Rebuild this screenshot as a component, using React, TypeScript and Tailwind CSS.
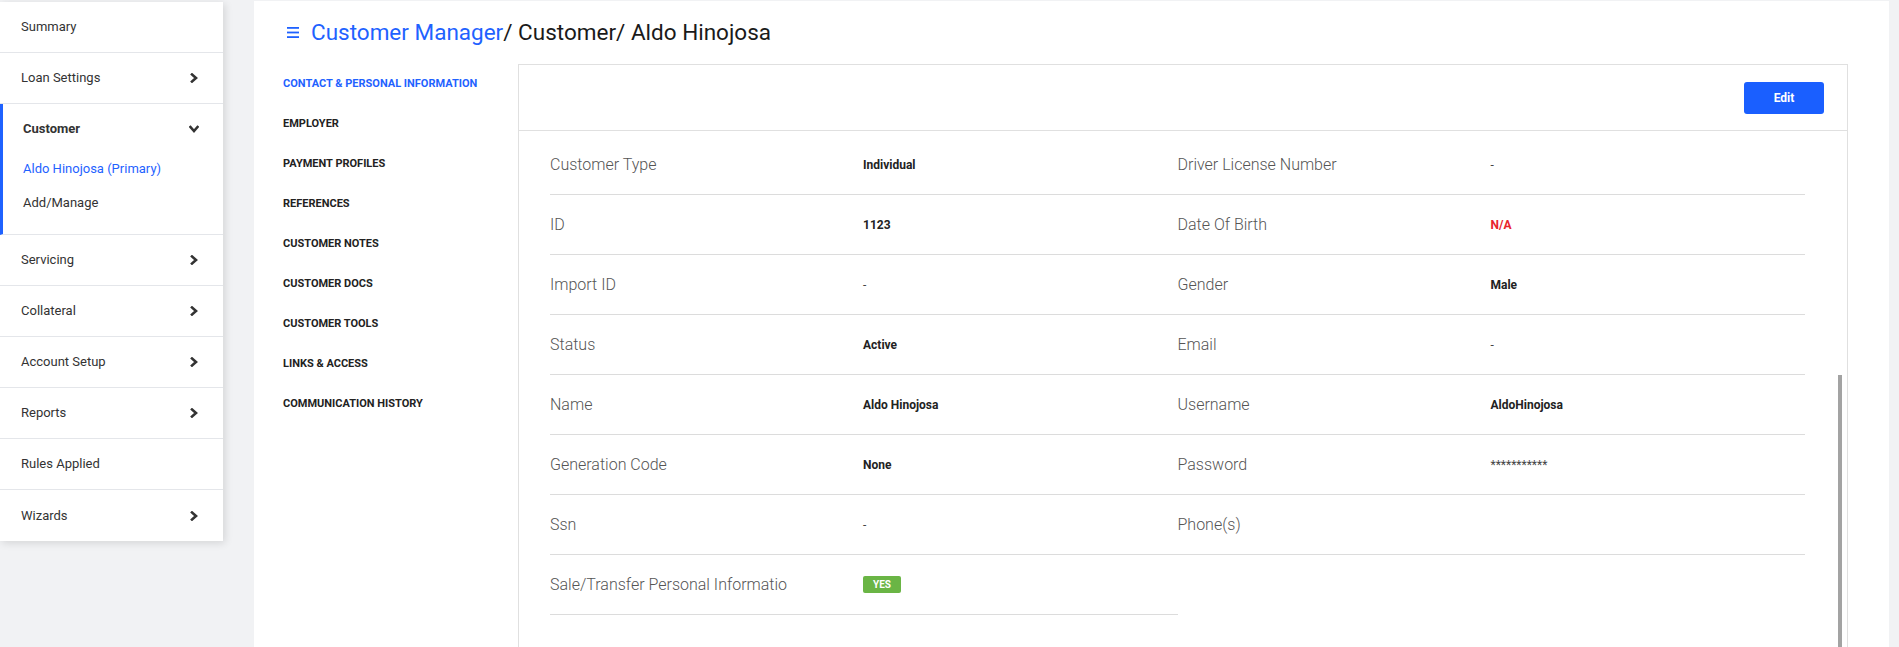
const sideItems = [
  { label: 'Summary', arrow: false },
  { label: 'Loan Settings', arrow: true },
];
const sideItemsAfter = [
  { label: 'Servicing', arrow: true },
  { label: 'Collateral', arrow: true },
  { label: 'Account Setup', arrow: true },
  { label: 'Reports', arrow: true },
  { label: 'Rules Applied', arrow: false },
  { label: 'Wizards', arrow: true },
];

const tabs = [
  'Contact & Personal Information',
  'Employer',
  'Payment Profiles',
  'References',
  'Customer Notes',
  'Customer Docs',
  'Customer Tools',
  'Links & Access',
  'Communication History',
];

type Field = { label: string; value?: string; kind?: 'red' | 'badge' | 'plain' };

const rows: [Field, Field | null][] = [
  [{ label: 'Customer Type', value: 'Individual' }, { label: 'Driver License Number', value: '-', kind: 'plain' }],
  [{ label: 'ID', value: '1123' }, { label: 'Date Of Birth', value: 'N/A', kind: 'red' }],
  [{ label: 'Import ID', value: '-', kind: 'plain' }, { label: 'Gender', value: 'Male' }],
  [{ label: 'Status', value: 'Active' }, { label: 'Email', value: '-', kind: 'plain' }],
  [{ label: 'Name', value: 'Aldo Hinojosa' }, { label: 'Username', value: 'AldoHinojosa' }],
  [{ label: 'Generation Code', value: 'None' }, { label: 'Password', value: '***********', kind: 'plain' }],
  [{ label: 'Ssn', value: '-', kind: 'plain' }, { label: 'Phone(s)' }],
  [{ label: 'Sale/Transfer Personal Informatio', value: 'YES', kind: 'badge' }, null],
];

function Chevron({ down }: { down?: boolean }) {
  return (
    <svg width="10" height="10" viewBox="0 0 10 10" className={down ? 'rotate-90' : ''}>
      <polyline points="3,1.5 7,5 3,8.5" fill="none" stroke="#333" strokeWidth="2.6" strokeLinecap="square" />
    </svg>
  );
}

function SideRow({ label, arrow, last }: { label: string; arrow: boolean; last?: boolean }) {
  return (
    <div
      className={`flex h-[51px] items-center justify-between pl-[21px] pr-[24px] text-[13px] text-[#333] ${
        last ? '' : 'border-b border-[#e4e6ea]'
      }`}
    >
      <span>{label}</span>
      {arrow && <Chevron />}
    </div>
  );
}

function Value({ f }: { f: Field }) {
  if (!f.value) return null;
  if (f.kind === 'badge')
    return (
      <span className="rounded-[2px] bg-[#6ab545] px-[10px] py-[2px] text-[10px] font-bold leading-[13px] text-white">
        {f.value}
      </span>
    );
  if (f.kind === 'red') return <span className="text-[12px] font-bold text-[#e8242c]">{f.value}</span>;
  if (f.kind === 'plain') return <span className="text-[12px] text-[#444]">{f.value}</span>;
  return <span className="text-[12px] font-bold text-[#222]">{f.value}</span>;
}

function Cell({ f }: { f: Field | null }) {
  if (!f) return <div />;
  return (
    <div className="flex h-[60px] items-center border-b border-[#dcdcdc]">
      <div className="w-[313px] text-[16px] font-light text-[#555]">{f.label}</div>
      <Value f={f} />
    </div>
  );
}

export default function App() {
  return (
    <div
      className="flex h-screen overflow-hidden bg-[#f1f2f4]"
      style={{ fontFamily: 'Roboto, "Liberation Sans", sans-serif' }}
    >
      <aside className="mt-[2px] w-[223px] shrink-0 self-start bg-white shadow-[2px_2px_8px_rgba(0,0,0,0.12)]">
        {sideItems.map((s) => (
          <SideRow key={s.label} {...s} />
        ))}
        <div className="h-[131px] border-b border-l-[3px] border-[#e4e6ea] border-l-[#1f62ff] pt-[15px]">
          <div className="flex items-center justify-between pl-[20px] pr-[24px] text-[13px] font-bold text-[#333]">
            <span>Customer</span>
            <Chevron down />
          </div>
          <div className="mt-[20px] pl-[20px] text-[13px] text-[#1f62ff]">Aldo Hinojosa (Primary)</div>
          <div className="mt-[15px] pl-[20px] text-[13px] text-[#333]">Add/Manage</div>
        </div>
        {sideItemsAfter.map((s, i) => (
          <SideRow key={s.label} {...s} last={i === sideItemsAfter.length - 1} />
        ))}
      </aside>

      <main className="ml-[31px] mr-[10px] mt-[1px] flex min-w-0 flex-1 flex-col bg-white">
        <header className="flex h-[63px] items-center pl-[33px]">
          <svg width="12" height="13" viewBox="0 0 12 13" className="mr-[12px]">
            <rect x="0" y="1" width="12" height="1.8" fill="#1f62ff" />
            <rect x="0" y="5.6" width="12" height="1.8" fill="#1f62ff" />
            <rect x="0" y="10.2" width="12" height="1.8" fill="#1f62ff" />
          </svg>
          <h1 className="text-[22.5px] text-[#1a1a1a]">
            <span className="text-[#1f62ff]">Customer Manager</span>/ Customer/ Aldo Hinojosa
          </h1>
        </header>

        <div className="flex flex-1">
          <nav className="w-[264px] shrink-0 pl-[29px]">
            {tabs.map((t, i) => (
              <div
                key={t}
                className={`flex h-[40px] items-center text-[11px] font-bold uppercase ${
                  i === 0 ? 'text-[#1f62ff]' : 'text-[#222]'
                }`}
              >
                {t}
              </div>
            ))}
          </nav>

          <section className="relative mr-[41px] flex-1 border-x border-t border-[#e0e0e0]">
            <div className="flex h-[66px] items-center justify-end border-b border-[#e0e0e0] pr-[23px]">
              <button className="h-[32px] w-[80px] rounded-[3px] bg-[#1a5fff] text-[12px] font-bold text-white">
                Edit
              </button>
            </div>
            <div className="grid grid-cols-2 pl-[31px] pr-[42px] pt-[4px]">
              {rows.map(([l, r], i) => [
                <Cell key={`l${i}`} f={l} />,
                <Cell key={`r${i}`} f={r} />,
              ])}
            </div>
            <div className="absolute bottom-0 right-[5px] top-[310px] w-[4px] bg-[#a3a3a3]" />
          </section>
        </div>
      </main>
    </div>
  );
}
